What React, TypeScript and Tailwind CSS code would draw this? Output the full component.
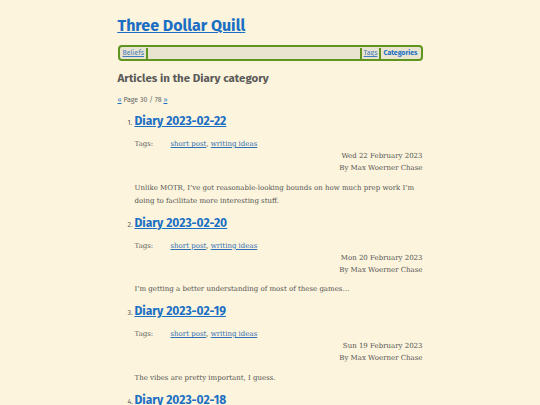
import React from "react";

const posts = [
  { t: "Diary 2023-02-22", d: "Wed 22 February 2023", s: "Unlike MOTR, I\u2019ve got reasonable-looking bounds on how much prep work I\u2019m doing to facilitate more interesting stuff." },
  { t: "Diary 2023-02-20", d: "Mon 20 February 2023", s: "I\u2019m getting a better understanding of most of these games\u2026" },
  { t: "Diary 2023-02-19", d: "Sun 19 February 2023", s: "The vibes are pretty important, I guess." },
  { t: "Diary 2023-02-18", d: "Sat 18 February 2023", s: "" },
];

const head = { fontFamily: '"Fira Sans", "Noto Sans", sans-serif' };
const body = { fontFamily: '"DejaVu Serif", "Liberation Serif", serif' };

export default function App() {
  return (
    <div className="bg-[#fcf4dc] text-[#555] overflow-hidden h-[405px]">
      <div className="w-[305px] mx-auto pt-[15px]" style={body}>
        <h1 className="text-[16px] font-bold leading-[22px] text-[#1a6fc4] underline" style={head}>
          <a href="#">Three Dollar Quill</a>
        </h1>
        <nav className="mt-[8px] border-2 border-[#5f951e] rounded-[4px] bg-[#e9e4cf] flex items-center h-[16px] text-[7px] leading-[12px] px-[1px]" style={head}>
          <a className="text-[#3f7cc0] underline px-[2px]">Beliefs</a>
          <span className="w-[2px] h-[11px] bg-[#5f951e]" />
          <span className="flex-1" />
          <span className="w-[2px] h-[11px] bg-[#5f951e]" />
          <a className="text-[#3f7cc0] underline px-[2px]">Tags</a>
          <span className="w-[2px] h-[11px] bg-[#5f951e]" />
          <a className="text-[#1a6fc4] font-bold px-[2px]">Categories</a>
        </nav>
        <h2 className="mt-[8px] text-[11.5px] font-bold leading-[18px] text-[#5a5a5a]" style={head}>
          Articles in the Diary category
        </h2>
        <p className="mt-[8px] text-[7px] leading-[10px] text-[#666]" style={head}>
          <a className="text-[#1a6fc4] underline">«</a> Page 30 / 78 <a className="text-[#1a6fc4] underline">»</a>
        </p>
        <ol className="mt-[7px] pl-[17px]">
          {posts.map((p, i) => (
            <li key={i} className="mb-[6px]">
              <div className="flex items-baseline">
                <span className="text-[7px] text-[#555] w-[0px] -ml-[7px] mr-[7px]" style={head}>{i + 1}.</span>
                <a className="text-[12px] font-bold leading-[18px] text-[#1a6fc4] underline" style={head}>{p.t}</a>
              </div>
              <div className="mt-[9px] flex text-[7px] leading-[10px]">
                <span className="w-[36px] text-[#666]">Tags:</span>
                <span>
                  <a className="text-[#2f6fb4] underline">short post</a>, <a className="text-[#2f6fb4] underline">writing ideas</a>
                </span>
              </div>
              <div className="text-right text-[7px] leading-[12px] mt-[1px] text-[#555]">
                <div>{p.d}</div>
                <div>By Max Woerner Chase</div>
              </div>
              <p className="mt-[7.5px] text-[7px] leading-[13px] text-[#555]">{p.s}</p>
            </li>
          ))}
        </ol>
      </div>
    </div>
  );
}
